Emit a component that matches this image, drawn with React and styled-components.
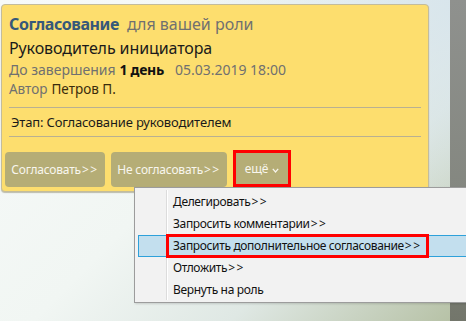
import React from "react";
import styled, { createGlobalStyle } from "styled-components";

const GlobalStyle = createGlobalStyle`
  html, body { margin: 0; padding: 0; }
  body { font-family: "Noto Sans", "Open Sans", sans-serif; }
  * { box-sizing: border-box; }
`;

const Page = styled.div`
  position: relative;
  width: 466px;
  height: 321px;
  overflow: hidden;
  display: flex;
  align-items: flex-start;
  background:
    radial-gradient(ellipse at 100% 0%, rgba(214, 228, 236, 0.9) 0%, rgba(214, 228, 236, 0) 45%),
    linear-gradient(135deg, #f7faf9 0%, #f1f6f3 45%, #dfe8e4 70%, #b4bfa2 100%);
`;

const Card = styled.section`
  width: 428px;
  height: 188px;
  margin: 4px 0 0 1px;
  padding: 7px 4px 0 4px;
  background: #fdde6e;
  border: 1px solid #c3bc9c;
  border-radius: 4px;
  box-shadow: 0 1px 1px rgba(90, 80, 40, 0.35);
  display: flex;
  flex-direction: column;
`;

const Spacer = styled.div`
  flex: 1;
`;

const SideStrip = styled.div`
  width: 16px;
  height: 100%;
  background: linear-gradient(to bottom, #8f918e 0%, #848780 60%, #73766b 100%);
`;

const Info = styled.div`
  padding: 0 3px 0 3px;
`;

const Line = styled.div`
  height: ${(p) => p.$h}px;
  line-height: ${(p) => p.$h}px;
  font-size: ${(p) => p.$size}px;
  letter-spacing: ${(p) => p.$ls || 0}px;
  white-space: nowrap;
  color: #1a1a1a;
`;

const Title = styled.span`
  font-weight: 700;
  color: #36587a;
  letter-spacing: -0.4px;
  margin-right: 8px;
`;

const Muted = styled.span`
  color: #707070;
`;

const Strong = styled.span`
  font-weight: 700;
  color: #111;
  letter-spacing: -0.3px;
  margin: 0 11px 0 4px;
`;

const Author = styled.span`
  color: #3a2c0c;
  margin-left: 4px;
`;

const Divider = styled.hr`
  margin: 0;
  border: 0;
  border-top: 1px solid #b9b092;
  height: 0;
`;

const Stage = styled.div`
  height: 28px;
  line-height: 28px;
  padding-left: 2px;
  font-size: 13px;
  letter-spacing: -0.15px;
  color: #1a1a1a;
  white-space: nowrap;
`;

const Actions = styled.div`
  display: flex;
  align-items: flex-end;
  gap: 6px;
  margin: 13px 0 0 -1px;
  height: 37px;
`;

const ActionButton = styled.button`
  height: ${(p) => (p.$marked ? 37 : 35)}px;
  width: ${(p) => p.$w}px;
  padding: 0;
  border: ${(p) => (p.$marked ? "3px solid #ff0000" : "0")};
  border-radius: ${(p) => (p.$marked ? "0" : "4px")};
  background: #b5ad76;
  color: #f8f6ee;
  font-family: "Noto Sans", "Open Sans", sans-serif;
  font-size: 12px;
  letter-spacing: -0.2px;
  display: inline-flex;
  align-items: center;
  justify-content: center;
  cursor: pointer;
`;

const Arrows = styled.span`
  letter-spacing: 1.5px;
  margin-left: 1px;
`;

const Chevron = () => (
  <svg width="7" height="5" viewBox="0 0 7 5" style={{ marginLeft: 4, marginTop: 3 }}>
    <path d="M0.8 0.8 L3.5 4 L6.2 0.8" fill="none" stroke="#f8f6ee" strokeWidth="1.2" />
  </svg>
);

const Menu = styled.ul`
  position: absolute;
  left: 134px;
  top: 187px;
  width: 340px;
  height: 116px;
  margin: 0;
  padding: 3px 0 2px 3px;
  list-style: none;
  background: #f2f2f2;
  border: 1px solid #9c9c9c;
  box-shadow: 1px 1px 2px rgba(0, 0, 0, 0.15);
  &::before {
    content: "";
    position: absolute;
    left: 31px;
    top: 2px;
    bottom: 2px;
    width: 1px;
    background: #dcdcdc;
    box-shadow: 1px 0 0 #ffffff;
  }
`;

const MenuItem = styled.li`
  position: relative;
  height: 22px;
  line-height: ${(p) => (p.$active ? 20 : 22)}px;
  padding-left: ${(p) => (p.$active ? 34 : 35)}px;
  font-size: 12px;
  letter-spacing: -0.35px;
  color: #111;
  white-space: nowrap;
  background: ${(p) => (p.$active ? "#c3dfee" : "transparent")};
  border: ${(p) => (p.$active ? "1px solid #2ea1da" : "0")};
  z-index: 1;
`;

const Annotation = styled.span`
  position: absolute;
  left: 27px;
  top: -2px;
  width: 263px;
  height: 24px;
  border: 3px solid #ff0000;
  pointer-events: none;
`;

const Action = ({ label, w, marked, more }) => (
  <ActionButton $w={w} $marked={marked}>
    {label}
    {more ? <Chevron /> : <Arrows>&gt;&gt;</Arrows>}
  </ActionButton>
);

const menuItems = [
  { label: "Делегировать", arrows: true },
  { label: "Запросить комментарии", arrows: true },
  { label: "Запросить дополнительное согласование", arrows: true, active: true },
  { label: "Отложить", arrows: true },
  { label: "Вернуть на роль", arrows: false },
];

export default function App() {
  return (
    <>
      <GlobalStyle />
      <Page>
        <Card>
          <Info>
            <Line $h={24} $size={16}>
              <Title>Согласование</Title>
              <Muted>для вашей роли</Muted>
            </Line>
            <Line $h={24} $size={16} $ls={-0.1}>Руководитель инициатора</Line>
            <Line $h={20} $size={14}>
              <Muted>До завершения</Muted>
              <Strong>1 день</Strong>
              <Muted>05.03.2019 18:00</Muted>
            </Line>
            <Line $h={18} $size={13.5}>
              <Muted>Автор</Muted>
              <Author>Петров П.</Author>
            </Line>
          </Info>
          <Info style={{ marginTop: 9 }}>
            <Divider />
            <Stage>Этап: Согласование руководителем</Stage>
            <Divider />
          </Info>
          <Actions>
            <Action label="Согласовать" w={100} />
            <Action label="Не согласовать" w={116} />
            <Action label="ещё" w={58} marked more />
          </Actions>
        </Card>
        <Spacer />
        <SideStrip />
        <Menu>
          {menuItems.map((m) => (
            <MenuItem key={m.label} $active={m.active}>
              {m.label}
              {m.arrows && <Arrows>&gt;&gt;</Arrows>}
              {m.active && <Annotation />}
            </MenuItem>
          ))}
        </Menu>
      </Page>
    </>
  );
}
